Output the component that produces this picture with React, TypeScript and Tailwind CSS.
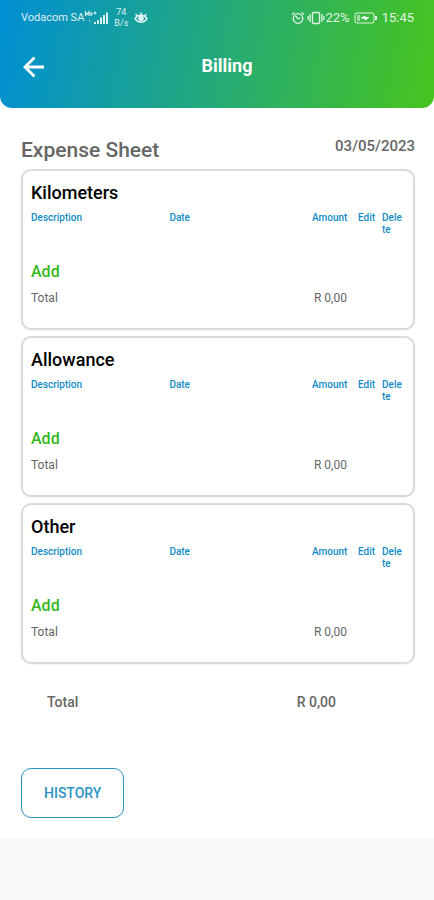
import { useState } from "react";

type Item = {
  description: string;
  date: string;
  amount: number;
};

type Section = {
  title: string;
  items: Item[];
};

const sections: Section[] = [
  { title: "Kilometers", items: [] },
  { title: "Allowance", items: [] },
  { title: "Other", items: [] },
];

const sum = (items: Item[]) => items.reduce((acc, i) => acc + i.amount, 0);
const money = (value: number) => "R " + value.toFixed(2).replace(".", ",");

const StatusBar = () => (
  <div className="flex h-8 items-center justify-between pl-[21px] pr-5 pt-1 text-white/85">
    <div className="flex items-center">
      <span className="text-[11px] leading-4">Vodacom SA</span>
      <svg width="24" height="16" viewBox="0 0 24 16" fill="none" stroke="currentColor" aria-hidden="true">
        <path d="M1.500 6V2l1.800 2.500L5 2v4M7 2v4M7 4h2M9.500 3h3M11 1.500v3" strokeWidth="1.200" />
        <path d="M5.500 9v3" strokeOpacity="0.5" />
        <path d="M11 14v-2M14 14v-4M17 14V7.500M20 14V5M23 14V2.500" strokeWidth="2" />
      </svg>
      <span className="ml-1.5 text-center text-[9px] leading-[11px]">
        74
        <br />
        B/s
      </span>
      <svg className="ml-1.5" width="14" height="14" viewBox="0 0 14 14" fill="none" stroke="currentColor" strokeWidth="1.500" aria-hidden="true">
        <path d="M1 7.500c3-4.500 9-4.500 12 0-3 5-9 5-12 0z" />
        <circle cx="7" cy="7.500" r="2" fill="currentColor" />
        <path d="M7 4.500V1.500M3.500 5L1.500 3M10.500 5l2-2" />
      </svg>
    </div>
    <div className="flex items-center">
      <svg width="14" height="14" viewBox="0 0 14 14" fill="none" stroke="currentColor" strokeWidth="1.300" aria-hidden="true">
        <circle cx="7" cy="7.500" r="4.800" />
        <path d="M1 3.500L3.500 1.500M13 3.500L10.500 1.500M4.500 5L7 7.800l2.500-.8" />
      </svg>
      <svg className="ml-0.5" width="18" height="14" viewBox="0 0 18 14" fill="none" stroke="currentColor" strokeWidth="1.300" aria-hidden="true">
        <rect x="5.500" y="1.500" width="7" height="11" rx="1" />
        <path d="M3.200 3v8M1.200 5v4M14.800 3v8M16.800 5v4" />
      </svg>
      <span className="text-[13px] leading-4">22%</span>
      <svg className="ml-1" width="24" height="12" viewBox="0 0 24 12" fill="none" stroke="currentColor" aria-hidden="true">
        <rect x="1" y="1" width="19" height="10" rx="2" />
        <rect x="3" y="3" width="3" height="6" fill="currentColor" stroke="none" fillOpacity="0.6" />
        <path d="M7 6l4-2v1.500h4l-4 2.500V6.500z" fill="currentColor" />
        <path d="M22 4v4" strokeWidth="2" />
      </svg>
      <span className="ml-1 text-[13px] leading-4">15:45</span>
    </div>
  </div>
);

const ExpenseCard = ({ section, onAdd }: { section: Section; onAdd: () => void }) => (
  <section className="rounded-[10px] border-2 border-[#dadada] bg-white px-2 pb-5 pt-2 shadow-xs">
    <h3 className="pb-px text-lg leading-7 font-medium text-black">{section.title}</h3>
    <table className="w-full table-fixed text-left">
      <colgroup>
        <col className="w-[37%]" />
        <col />
        <col className="w-[46px]" />
        <col className="w-[24px]" />
        <col className="w-[23px]" />
      </colgroup>
      <thead>
        <tr className="h-12 align-top text-[10px] leading-3 text-[#128cc6]">
          <th className="pt-1 font-medium">Description</th>
          <th className="pt-1 font-medium">Date</th>
          <th className="pt-1 font-medium">Amount</th>
          <th className="pt-1 font-medium">Edit</th>
          <th className="pt-1 font-medium break-all">Delete</th>
        </tr>
      </thead>
      <tbody>
        {section.items.map((item, index) => (
          <tr key={index} className="text-xs">
            <td>{item.description}</td>
            <td>{item.date}</td>
            <td colSpan={3}>{money(item.amount)}</td>
          </tr>
        ))}
        <tr>
          <td colSpan={5}>
            <button onClick={onAdd} className="block text-base leading-8 font-medium text-[#35b71c]">
              Add
            </button>
          </td>
        </tr>
      </tbody>
      <tfoot>
        <tr className="text-xs leading-5 text-[#666]">
          <th className="font-normal">Total</th>
          <td />
          <td colSpan={3} className="pl-0.5">
            {money(sum(section.items))}
          </td>
        </tr>
      </tfoot>
    </table>
  </section>
);

const App = () => {
  const [data, setData] = useState<Section[]>(sections);

  const addItem = (index: number) => {
    setData(
      data.map((s, i) =>
        i === index ? { ...s, items: [...s.items, { description: "", date: "", amount: 0 }] } : s
      )
    );
  };

  return (
    <div className="min-h-screen bg-[#fafafa] font-[Roboto,sans-serif]">
      <div className="bg-white">
        <header className="h-[108px] rounded-b-xl bg-linear-[100deg,#008fd5,#47c41d] text-white">
          <StatusBar />
          <div className="grid grid-cols-[1fr_auto_1fr] items-center pl-5 pt-4">
            <button aria-label="Back" className="w-7">
              <svg width="28" height="28" viewBox="0 0 28 28" fill="none" stroke="currentColor" strokeWidth="2.800" aria-hidden="true">
                <path d="M24 15H5M14.500 5.500L5 15l9.500 9.500" />
              </svg>
            </button>
            <h1 className="text-lg leading-9 font-bold">Billing</h1>
          </div>
        </header>
        <main className="pb-5 pl-[21px] pr-[19px] pt-7">
          <div className="flex items-start justify-between pb-[5px] text-[#666]">
            <h2 className="text-[21px] leading-7 font-medium">Expense Sheet</h2>
            <time className="text-[15px] leading-5 font-medium">03/05/2023</time>
          </div>
          <div className="flex flex-col gap-1.5">
            {data.map((section, index) => (
              <ExpenseCard key={section.title} section={section} onAdd={() => addItem(index)} />
            ))}
          </div>
          <dl className="flex px-[26px] pt-7 text-sm leading-5 font-medium text-[#666]">
            <dt className="w-[73%]">Total</dt>
            <dd>{money(data.reduce((acc, s) => acc + sum(s.items), 0))}</dd>
          </dl>
          <button className="mt-14 h-[50px] rounded-[10px] border border-[#2a93c4] px-[22px] text-sm font-medium text-[#2a93c4]">
            HISTORY
          </button>
        </main>
      </div>
    </div>
  );
};

export default App;
